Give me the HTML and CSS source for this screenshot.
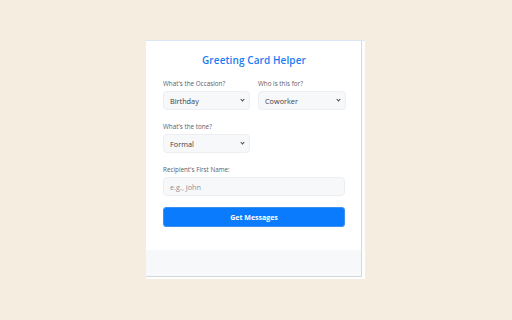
FILE: index.html
```html
<!DOCTYPE html>
<html lang="en">
<head>
    <meta charset="UTF-8">
    <meta name="viewport" content="width=device-width, initial-scale=1.0">
    <title>Greeting Card Helper</title>
    <link rel="stylesheet" href="styles.css">
</head>
<body>

    <div class="frame">
        <div class="popup">
            <div class="container">
                <h1>Greeting Card Helper</h1>

                <!-- Occasion and recipient -->
                <div class="row">
                    <div class="input-field">
                        <label for="occasion">What's the Occasion?</label>
                        <div class="select-wrap">
                            <select id="occasion">
                                <option>Birthday</option>
                            </select>
                        </div>
                    </div>
                    <div class="input-field">
                        <label for="relation">Who is this for?</label>
                        <div class="select-wrap">
                            <select id="relation">
                                <option>Coworker</option>
                            </select>
                        </div>
                    </div>
                </div>

                <div class="row">
                    <div class="input-field">
                        <label for="tone">What's the tone?</label>
                        <div class="select-wrap">
                            <select id="tone">
                                <option>Formal</option>
                            </select>
                        </div>
                    </div>
                    <div></div>
                </div>

                <div class="input-field">
                    <label for="firstName">Recipient's First Name:</label>
                    <input type="text" id="firstName" placeholder="e.g., John">
                </div>

                <button class="button" id="getMessages">Get Messages</button>
            </div>
            <div class="footer"></div>
        </div>
    </div>

</body>
</html>
```

FILE: styles.css
```css
body {
    font-family: "Open Sans", Arial, sans-serif;
    margin: 0;
    width: 512px;
    height: 320px;
    background-color: #f5eddf;
    overflow: hidden;
}
.frame {
    margin: 40px 0 0 146px;
    width: 219px;
    height: 239px;
    background: #fdfdfd;
    border-top: 1px solid #dbe6f5;
    box-sizing: border-box;
}
.popup {
    width: 216px;
    height: 236px;
    background: #fff;
    border-right: 1px solid #d6d8db;
    border-bottom: 1px solid #d6d8db;
    box-sizing: border-box;
    display: flex;
    flex-direction: column;
}
.container {
    padding: 12px 16px 0 17px;
    flex: 1;
}
h1 {
    text-align: center;
    margin: 0 0 12px;
    font-size: 10px;
    font-weight: 600;
    color: #1a7cf3;
    letter-spacing: 0.1px;
}
.row {
    display: grid;
    grid-template-columns: 87px 88px;
    column-gap: 8px;
}
.input-field {
    margin-bottom: 12px;
}
.input-field label {
    display: block;
    font-size: 6.3px;
    color: #5a6068;
    margin-bottom: 3px;
}
.select-wrap {
    position: relative;
}
.select-wrap::after {
    content: "";
    position: absolute;
    right: 6px;
    top: 7px;
    width: 2px;
    height: 2px;
    border-right: 1px solid #444;
    border-bottom: 1px solid #444;
    transform: rotate(45deg);
    pointer-events: none;
}
.input-field select,
.input-field input {
    display: block;
    width: 100%;
    height: 19px;
    padding: 0 6px;
    font-family: inherit;
    font-size: 7.3px;
    font-weight: 400;
    color: #3b4047;
    background-color: #f7f8fa;
    border: 1px solid #eceef1;
    border-radius: 4px;
    box-sizing: border-box;
    appearance: none;
    outline: none;
}
.input-field input {
    margin-bottom: -1px;
}
.input-field input::placeholder {
    color: #8b9096;
}
.button {
    display: block;
    width: 100%;
    height: 20px;
    padding: 0;
    background-color: #0a7bfc;
    color: white;
    border: 1px solid #3d8ff0;
    border-radius: 3px;
    font-family: inherit;
    font-size: 7px;
    font-weight: 700;
    cursor: pointer;
}
.footer {
    height: 26px;
    background-color: #f6f8fa;
}
```
